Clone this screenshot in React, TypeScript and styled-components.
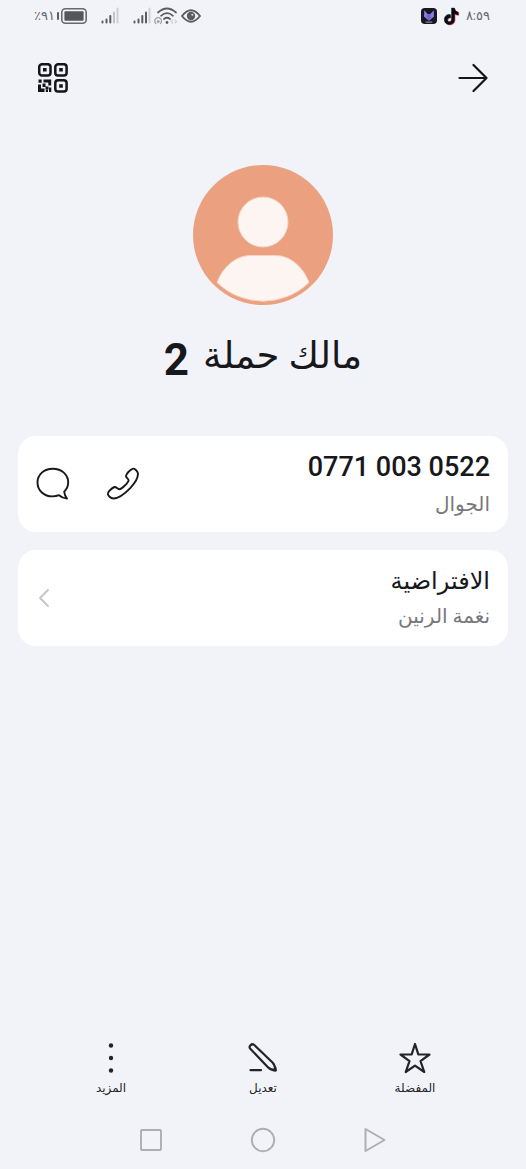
import React from "react";
import styled, { createGlobalStyle } from "styled-components";

const GlobalStyle = createGlobalStyle`
  * { box-sizing: border-box; }
  body { margin: 0; background: #f1f3f8; }
  button { font: inherit; color: inherit; background: none; border: 0; padding: 0; cursor: pointer; }
  svg { display: block; }
`;

const Screen = styled.div`
  min-height: 100vh;
  display: flex;
  flex-direction: column;
  background: #f1f3f8;
  color: #17181b;
  font-family: Roboto, "Noto Sans", "DejaVu Sans", sans-serif;
`;

const StatusBar = styled.div`
  display: flex;
  justify-content: space-between;
  align-items: center;
  height: 32px;
  padding: 0 36px 0 34px;
  color: #66676b;
  font-size: 13px;
  line-height: 16px;
`;

const StatusGroup = styled.div<{ $gap: number }>`
  display: flex;
  align-items: center;
  gap: ${(p) => p.$gap}px;
`;

const Header = styled.header`
  display: flex;
  justify-content: space-between;
  align-items: center;
  height: 92px;
  padding: 0 36px;
`;

const IconButton = styled.button<{ $width?: number }>`
  display: flex;
  align-items: center;
  justify-content: center;
  width: ${(p) => p.$width ?? 34}px;
  height: 34px;
`;

const Profile = styled.section`
  display: flex;
  flex-direction: column;
  align-items: center;
  padding-top: 41px;
`;

const Name = styled.h1`
  display: flex;
  align-items: flex-start;
  gap: 14px;
  margin: 24px 0 0;
  font-size: 37px;
  line-height: 54px;
  font-weight: 400;
`;

const NameNumber = styled.span`
  font-size: 44px;
  line-height: 62px;
  font-weight: 700;
`;

const Cards = styled.main`
  flex: 1;
  display: flex;
  flex-direction: column;
  gap: 18px;
  padding: 45px 18px 0;
`;

const Card = styled.section`
  display: flex;
  align-items: center;
  justify-content: space-between;
  min-height: 96px;
  padding: 0 18px;
  border-radius: 18px;
  background: #fff;
`;

const CardText = styled.div`
  display: flex;
  flex-direction: column;
  align-items: flex-start;
`;

const Title = styled.div`
  font-size: 24px;
  line-height: 36px;
`;

const PhoneNumber = styled(Title)`
  font-size: 27px;
  line-height: 40px;
  font-weight: 500;
`;

const Caption = styled.div`
  color: #77787b;
  font-size: 20px;
  line-height: 34px;
`;

const Actions = styled.div`
  display: flex;
  gap: 36px;
`;

const Toolbar = styled.nav`
  display: grid;
  grid-template-columns: repeat(3, 1fr);
  padding: 0 35px;
`;

const ToolButton = styled.button`
  display: flex;
  flex-direction: column;
  align-items: center;
  gap: 1px;
  color: #232427;
`;

const ToolLabel = styled.span`
  font-size: 12px;
  line-height: 24px;
`;

const SystemNav = styled.nav`
  display: flex;
  justify-content: center;
  gap: 84px;
  padding: 26px 0 15px;
`;

const NavButton = styled.button`
  width: 28px;
  height: 28px;
`;

const Battery = () => (
  <svg width="30" height="18" viewBox="0 0 30 18" aria-hidden="true">
    <rect x="0" y="5" width="2" height="8" rx="1" fill="#5b5c60" />
    <rect x="4.8" y="1.8" width="24.4" height="14.4" rx="3.5" fill="none" stroke="#68696c" strokeWidth="1.6" />
    <rect x="7.4" y="4.3" width="19.2" height="9.4" rx="1" fill="#555659" />
  </svg>
);

const Signal = ({ strong }: { strong: boolean }) => (
  <svg width="18" height="18" viewBox="0 0 18 18" strokeWidth="2" stroke="#5b5c60" strokeLinecap="round" aria-hidden="true">
    <path d="M1.5 14.5v1M5.5 12.500v3M9.300 9v6.500" />
    <path d="M13 5.500v10" stroke={strong ? "#5b5c60" : "#c2c3c7"} />
    <path d="M16.500 1.500v14" stroke="#cfd0d4" />
  </svg>
);

const Wifi = () => (
  <svg width="24" height="18" viewBox="0 0 24 18" fill="none" strokeLinecap="round" aria-hidden="true">
    <path d="M4 5.500Q13 -2.500 22 5.500M7 8.800Q13 3.500 19 8.800M10 12Q13 9.500 16 12" stroke="#5b5c60" strokeWidth="1.700" />
    <circle cx="13" cy="15.500" r="1.400" fill="#5b5c60" />
    <path d="M1.800 16.500A3.400 3.400 0 1 1 6.500 16.500" stroke="#a2a3a7" strokeWidth="1.300" />
    <circle cx="4.200" cy="14.500" r="1.500" fill="#a2a3a7" />
    <path d="M18.500 13l-1.500 1.500 1.500 1.500M21 13l1.500 1.500L21 16" stroke="#cfd0d4" strokeWidth="1.200" />
  </svg>
);

const Eye = () => (
  <svg width="20" height="18" viewBox="0 0 20 18" aria-hidden="true">
    <path d="M1 9Q10 -2.500 19 9Q10 20.500 1 9Z" fill="none" stroke="#5b5c60" strokeWidth="1.900" strokeLinejoin="round" />
    <circle cx="10" cy="9" r="4.200" fill="#5b5c60" />
    <circle cx="11.300" cy="7.800" r="1" fill="#dfe0e4" />
  </svg>
);

const FoxApp = () => (
  <svg width="16" height="16" viewBox="0 0 17 17" aria-hidden="true">
    <rect width="17" height="17" rx="4" fill="#181724" />
    <path d="M3.500 2.500L7 6.500h3l3.500-4 .3 6.500L8.500 13.500 3.200 9Z" fill="#8f7de6" />
    <path d="M7 6.500h3l1 3-2.500 4L6 9.500Z" fill="#7261d0" />
    <path d="M5 15h7" stroke="#aaa6bb" strokeWidth="1" />
  </svg>
);

const NOTE =
  "M8.300 1h2.800c.2 2.100 1.400 3.500 3.500 3.700v2.900c-1.300 0-2.500-.4-3.500-1.100v5.300c0 6.300-9.600 6.500-9.600.3 0-3.300 2.600-5.300 5.700-4.900v3c-1.500-.4-2.800.5-2.800 1.900 0 2.700 3.900 2.500 3.900-.5Z";

const TikTok = () => (
  <svg width="17" height="19" viewBox="0.5 0 15.5 18" aria-hidden="true">
    <path d={NOTE} fill="#75dfe2" transform="translate(-.5 -.4)" />
    <path d={NOTE} fill="#f0466c" transform="translate(.8 .6)" />
    <path d={NOTE} fill="#0c0c10" stroke="#0c0c10" strokeWidth=".3" />
  </svg>
);

const QrCode = () => (
  <svg width="30" height="30" viewBox="0 0 30 30" fill="none" stroke="#141518" strokeWidth="2.500" aria-hidden="true">
    <rect x="1.200" y="1.200" width="11.300" height="11.300" rx="2.800" />
    <rect x="17.300" y="1.200" width="11.300" height="11.300" rx="2.800" />
    <rect x="17.300" y="17.300" width="11.300" height="11.300" rx="2.800" />
    <path
      d="M5 5h3.600v3.600H5zM21.200 5h3.600v3.600h-3.600zM21.200 21.200h3.600v3.600h-3.600zM.5 16.500h3.200v3.200H.5zM5.500 16.500h7.700v6H10.300v-3H5.500zM0 21.500h3v4h3.500V29H0zM4.500 20.500h3v3h3v3h-3v-2.500h-3zM7.800 26.800H10V29H7.800zM11 24.500h2.300V29H11z"
      fill="#141518"
      stroke="none"
    />
  </svg>
);

const BackArrow = () => (
  <svg width="30" height="30" viewBox="0 0 30 30" fill="none" stroke="#141518" strokeWidth="2.200" strokeLinecap="round" strokeLinejoin="round" aria-hidden="true">
    <path d="M1.500 15H28.500M15.500 2L28.500 15 15.500 28" />
  </svg>
);

const Avatar = () => (
  <svg width="140" height="140" viewBox="0 0 140 140" role="img" aria-label="صورة جهة الاتصال">
    <circle cx="70" cy="70" r="70" fill="#eba17f" />
    <g fill="#fdf5f1" stroke="#f8d2c0" strokeWidth="1">
      <circle cx="70" cy="57" r="25" />
      <path d="M24 117.500C29 104 41 90.500 58 90.500H82C99 90.500 111 104 116 117.500A66 66 0 0 1 24 117.500Z" />
    </g>
  </svg>
);

const Phone = () => (
  <svg width="34" height="34" viewBox="0 0 34 34" fill="none" stroke="#17181b" strokeWidth="1.900" strokeLinejoin="round" aria-hidden="true">
    <path d="M26.500 1.800C28 .900 31.500 4 31.900 6.200C32.300 10 29.500 15.500 24.500 20.800C19 26.500 12.500 31.200 7.500 31.500C4.800 31.600 1.500 28.500 1.900 26.400C2.200 24.500 6.200 20.800 8.500 20C10.200 19.500 11.500 22.400 13.300 22.300C15.800 22.100 22.500 15.500 22.600 13.200C22.600 11.800 19.700 10.500 20 8.800C20.400 6.500 24.300 2.700 26.500 1.800Z" />
  </svg>
);

const Message = () => (
  <svg width="34" height="34" viewBox="0 0 34 34" fill="none" stroke="#17181b" strokeWidth="1.900" strokeLinejoin="round" aria-hidden="true">
    <path d="M23 28.200C21.200 29 19 29.400 16.500 29.400C8 29.400 1.500 23.500 1.500 15.500C1.500 7.500 8 1.800 16.800 1.800C25.600 1.800 32.200 7.500 32.200 15.500C32.200 19.200 30.500 22.300 28.200 24.700C28.500 27.500 29.400 29.800 31 31.600C28.300 31.300 25.300 30.300 23 28.200Z" />
  </svg>
);

const Chevron = () => (
  <svg width="12" height="20" viewBox="0 0 12 20" fill="none" stroke="#c3c4c6" strokeWidth="1.800" strokeLinecap="round" strokeLinejoin="round" aria-hidden="true">
    <path d="M10 2L2 10 10 18" />
  </svg>
);

const Star = () => (
  <svg width="34" height="34" viewBox="0 0 34 34" fill="none" stroke="#232427" strokeWidth="2.200" strokeLinejoin="round" aria-hidden="true">
    <path d="M17 3L20.300 13.400 31.500 13.500 22.500 20.200 26.300 31 17 24.600 7.700 31 11.500 20.200 2.500 13.500 13.700 13.400Z" />
  </svg>
);

const Pencil = () => (
  <svg width="34" height="34" viewBox="0 0 34 34" fill="none" stroke="#232427" strokeWidth="2.200" strokeLinecap="round" strokeLinejoin="round" aria-hidden="true">
    <path d="M4.300 7.800C2.300 5.500 5.500 1.800 8.300 4L26.500 21.500C28 23 29.200 26.300 29.500 29.300C26.500 29.200 23.200 27.700 21.700 26Z" />
    <path d="M27 29l2.500.3-.3-2.500" strokeWidth="2.500" />
    <path d="M4.500 29.200H15" />
  </svg>
);

const More = () => (
  <svg width="34" height="34" viewBox="0 0 34 34" fill="#232427" aria-hidden="true">
    <circle cx="17" cy="4.500" r="2.200" />
    <circle cx="17" cy="17" r="2.200" />
    <circle cx="17" cy="29.500" r="2.200" />
  </svg>
);

const NavIcon = ({ children }: { children: React.ReactNode }) => (
  <svg width="28" height="28" viewBox="0 0 28 28" fill="none" stroke="#adaeb2" strokeWidth="1.900" strokeLinejoin="round" aria-hidden="true">
    {children}
  </svg>
);

export default function App() {
  return (
    <Screen dir="rtl" lang="ar">
      <GlobalStyle />
      <StatusBar dir="ltr">
        <StatusGroup $gap={14}>
          <StatusGroup $gap={2}>
            <bdo dir="ltr">٪٩١</bdo>
            <Battery />
          </StatusGroup>
          <Signal strong={false} />
          <StatusGroup $gap={3}>
            <Signal strong />
            <Wifi />
            <Eye />
          </StatusGroup>
        </StatusGroup>
        <StatusGroup $gap={6}>
          <FoxApp />
          <TikTok />
          <bdo dir="ltr">٨:٥٩</bdo>
        </StatusGroup>
      </StatusBar>

      <Header>
        <IconButton aria-label="رجوع"><BackArrow /></IconButton>
        <IconButton aria-label="رمز الاستجابة"><QrCode /></IconButton>
      </Header>

      <Profile>
        <Avatar />
        <Name><span>مالك حملة</span> <NameNumber>2</NameNumber></Name>
      </Profile>

      <Cards>
        <Card>
          <CardText>
            <PhoneNumber dir="ltr">0771 003 0522</PhoneNumber>
            <Caption>الجوال</Caption>
          </CardText>
          <Actions>
            <IconButton aria-label="اتصال"><Phone /></IconButton>
            <IconButton aria-label="رسالة"><Message /></IconButton>
          </Actions>
        </Card>
        <Card>
          <CardText>
            <Title>الافتراضية</Title>
            <Caption>نغمة الرنين</Caption>
          </CardText>
          <IconButton $width={16} aria-label="فتح"><Chevron /></IconButton>
        </Card>
      </Cards>

      <Toolbar>
        <ToolButton><Star /><ToolLabel>المفضلة</ToolLabel></ToolButton>
        <ToolButton><Pencil /><ToolLabel>تعديل</ToolLabel></ToolButton>
        <ToolButton><More /><ToolLabel>المزيد</ToolLabel></ToolButton>
      </Toolbar>

      <SystemNav>
        <NavButton aria-label="السابق"><NavIcon><path d="M4.500 3L23.500 14 4.500 25Z" /></NavIcon></NavButton>
        <NavButton aria-label="الرئيسية"><NavIcon><circle cx="14" cy="14" r="11.200" /></NavIcon></NavButton>
        <NavButton aria-label="التطبيقات"><NavIcon><rect x="4" y="4" width="20" height="20" rx="1" /></NavIcon></NavButton>
      </SystemNav>
    </Screen>
  );
}
